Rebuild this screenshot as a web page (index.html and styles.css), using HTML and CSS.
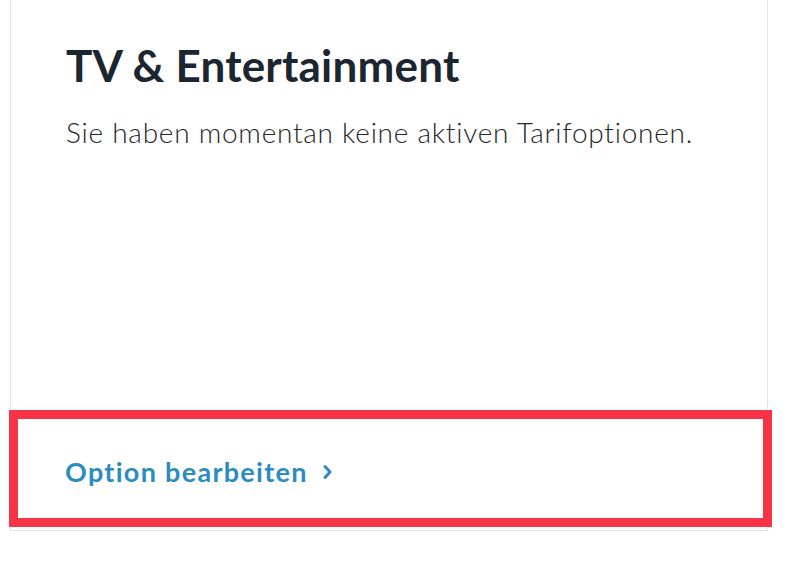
FILE: index.html
```html
<!DOCTYPE html>
<html lang="de">
<head>
<meta charset="utf-8">
<link rel="stylesheet" href="styles.css">
</head>
<body>
<div class="page">
  <div class="card">
    <div class="content">
      <h2 class="title">TV &amp; Entertainment</h2>
      <p class="text">Sie haben momentan keine aktiven Tarifoptionen.</p>
    </div>
    <div class="footer">
      <a class="link" href="#">Option bearbeiten <span class="chev"><svg width="11" height="16" viewBox="0 0 11 16"><path d="M3 2.5 L8 8 L3 13.5" fill="none" stroke="currentColor" stroke-width="3" stroke-linecap="round" stroke-linejoin="round"/></svg></span></a>
    </div>
  </div>
</div>
</body>
</html>
```
FILE: styles.css
```css
html, body { margin: 0; padding: 0; background: #fff; }
body { font-family: Lato, "Open Sans", sans-serif; width: 790px; height: 562px; overflow: hidden; }
.page { padding: 0 22px 0 10px; }
.card {
  margin-top: -2px;
  height: 533px;
  border: 1px solid #e4e4e4;
  border-top: none;
  display: flex;
  flex-direction: column;
  box-sizing: border-box;
}
.content { flex: 1; padding: 41px 0 0 55px; }
.title { margin: 0; font-size: 44px; font-weight: 700; color: #1c2630; letter-spacing: 0.2px; line-height: 1.2; }
.text { margin: 22px 0 0; font-size: 28px; font-weight: 300; color: #262626; line-height: 1.3; letter-spacing: 0.75px; }
.footer {
  margin: 0 -5px 3px -2px;
  height: 117px;
  border: 9px solid #f73347;
  box-sizing: border-box;
  display: flex;
  align-items: center;
  padding: 6px 0 0 47px;
}
.link { color: #2c8cbf; text-decoration: none; font-weight: 700; font-size: 27px; letter-spacing: 1.3px; display: flex; align-items: center; gap: 14px; }
.chev { display: flex; }
```
